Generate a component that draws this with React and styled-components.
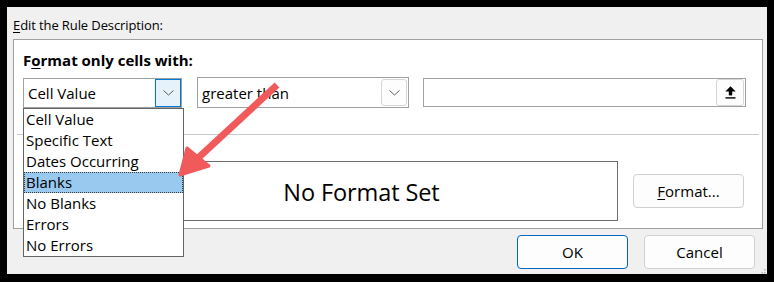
import React from "react";
import styled, { createGlobalStyle } from "styled-components";

const GlobalStyle = createGlobalStyle`
  html, body { margin: 0; padding: 0; background: #000; }
  body { font-family: "Open Sans", "Noto Sans", sans-serif; color: #000; }
  * { box-sizing: border-box; }
`;

const Screen = styled.div`
  position: relative;
  width: 774px;
  height: 282px;
  padding: 7px 7px 8px 7px;
  background: #000;
`;

const Dialog = styled.div`
  position: relative;
  display: flex;
  flex-direction: column;
  width: 760px;
  height: 267px;
  padding: 0 4px 0 6px;
  background: #f0f0f0;
`;

const SectionLabel = styled.div`
  height: 32px;
  padding: 9px 0 0 0;
  font-size: 13px;
  letter-spacing: -0.1px;
  line-height: 18px;
`;

const Key = styled.span`
  text-decoration: underline;
  text-underline-offset: 2px;
  text-decoration-thickness: 1px;
`;

const Panel = styled.div`
  position: relative;
  display: flex;
  flex-direction: column;
  width: 750px;
  height: 190px;
  border: 1px solid #a0a0a0;
  background: #fff;
`;

const PanelTitle = styled.div`
  padding: 10px 0 0 9px;
  font-size: 15px;
  font-weight: 700;
  line-height: 20px;
`;

const ControlRow = styled.div`
  display: flex;
  align-items: flex-start;
  margin-top: 7px;
  padding-left: 9px;
`;

const Combo = styled.div`
  display: flex;
  align-items: center;
  width: ${(p) => p.$w}px;
  height: ${(p) => p.$h}px;
  margin-top: ${(p) => p.$top || 0}px;
  margin-left: ${(p) => p.$left || 0}px;
  padding-left: 4px;
  border: 1px solid #a0a0a0;
  background: #fff;
`;

const ComboText = styled.span`
  flex: 1;
  font-size: 15px;
  line-height: 20px;
  white-space: nowrap;
`;

const DropButton = styled.div`
  display: flex;
  align-items: center;
  justify-content: center;
  width: ${(p) => p.$w || 26}px;
  height: ${(p) => p.$h || 27}px;
  margin-right: ${(p) => (p.$active ? 0 : 1)}px;
  border: 1px solid ${(p) => (p.$active ? "#0078d7" : "#d6d6d6")};
  border-radius: ${(p) => (p.$active ? 0 : 3)}px;
  background: ${(p) => (p.$active ? "#e5f1fb" : "#fdfdfd")};
`;

const Separator = styled.div`
  height: 1px;
  margin: 26px 3px 0 3px;
  background: #c9c9c9;
`;

const PreviewRow = styled.div`
  display: flex;
  align-items: center;
  gap: 15px;
  margin-top: 26px;
  padding-left: 91px;
`;

const Preview = styled.div`
  display: flex;
  align-items: center;
  justify-content: center;
  width: 513px;
  height: 60px;
  padding-top: 2px;
  border: 1px solid #6d6d6d;
  font-size: 23.5px;
  letter-spacing: -0.1px;
`;

const PushButton = styled.div`
  display: flex;
  align-items: center;
  justify-content: center;
  width: 111px;
  height: 34px;
  border: 1px solid ${(p) => (p.$primary ? "#0067c0" : "#d0d0d0")};
  border-radius: 4px;
  background: #fdfdfd;
  font-size: 15px;
`;

const DropList = styled.div`
  position: absolute;
  left: 9px;
  top: 68px;
  width: 161px;
  height: 149px;
  border: 1px solid #646464;
  background: #fff;
`;

const ListItem = styled.div`
  height: 21px;
  padding-left: 1px;
  border: 1px dotted ${(p) => (p.$selected ? "#3a3a3a" : "transparent")};
  background: ${(p) => (p.$selected ? "#99c9ef" : "transparent")};
  font-size: 15px;
  line-height: 19px;
  white-space: nowrap;
`;

const ButtonBar = styled.div`
  display: flex;
  justify-content: flex-end;
  gap: 16px;
  margin-top: 6px;
  padding-right: 8px;
`;

const Overlay = styled.svg`
  position: absolute;
  left: 0;
  top: 0;
  pointer-events: none;
`;

const Grip = styled.svg`
  position: absolute;
  right: 1px;
  bottom: 0px;
`;

const Chevron = () => (
  <svg width="11" height="6" viewBox="0 0 11 6">
    <polyline points="0.5,0.5 5.5,5 10.5,0.5" fill="none" stroke="#5c5c5c" strokeWidth="1" />
  </svg>
);

const UploadIcon = () => (
  <svg width="11" height="13" viewBox="0 0 11 13">
    <polygon points="0.3,5.4 5.5,0.3 10.7,5.4" fill="#000" />
    <rect x="3.8" y="5" width="3.4" height="4.4" fill="#000" />
    <rect x="0.5" y="11.2" width="10" height="1.4" fill="#000" />
  </svg>
);

const items = [
  "Cell Value",
  "Specific Text",
  "Dates Occurring",
  "Blanks",
  "No Blanks",
  "Errors",
  "No Errors",
];

export default function App() {
  return (
    <>
      <GlobalStyle />
      <Screen>
        <Dialog>
          <SectionLabel>
            <Key>E</Key>dit the Rule Description:
          </SectionLabel>
          <Panel>
            <PanelTitle>
              F<Key>o</Key>rmat only cells with:
            </PanelTitle>
            <ControlRow>
              <Combo $w={159} $h={30} $top={1}>
                <ComboText>Cell Value</ComboText>
                <DropButton $active $h={28}>
                  <Chevron />
                </DropButton>
              </Combo>
              <Combo $w={212} $h={31} $left={15}>
                <ComboText>greater than</ComboText>
                <DropButton>
                  <Chevron />
                </DropButton>
              </Combo>
              <Combo $w={323} $h={29} $top={1} $left={14}>
                <ComboText />
                <DropButton $w={28}>
                  <UploadIcon />
                </DropButton>
              </Combo>
            </ControlRow>
            <Separator />
            <PreviewRow>
              <Preview>No Format Set</Preview>
              <PushButton>
                <span>
                  <Key>F</Key>ormat...
                </span>
              </PushButton>
            </PreviewRow>
            <DropList>
              {items.map((it) => (
                <ListItem key={it} $selected={it === "Blanks"}>
                  {it}
                </ListItem>
              ))}
            </DropList>
          </Panel>
          <ButtonBar>
            <PushButton $primary>OK</PushButton>
            <PushButton>Cancel</PushButton>
          </ButtonBar>
          <Grip width="5" height="5" viewBox="0 0 5 5">
            <rect x="3" y="0" width="1.5" height="1.5" fill="#b4b4b4" />
            <rect x="0.5" y="3" width="1.5" height="1.5" fill="#b4b4b4" />
            <rect x="3" y="3" width="1.5" height="1.5" fill="#b4b4b4" />
          </Grip>
        </Dialog>
        <Overlay width="774" height="282" viewBox="0 0 774 282">
          <line x1="277" y1="85" x2="197" y2="159" stroke="#f05a5a" strokeWidth="7" />
          <polygon
            points="180,175 187,148 209,166"
            fill="#f05a5a"
            stroke="#f05a5a"
            strokeWidth="3"
            strokeLinejoin="round"
          />
        </Overlay>
      </Screen>
    </>
  );
}
